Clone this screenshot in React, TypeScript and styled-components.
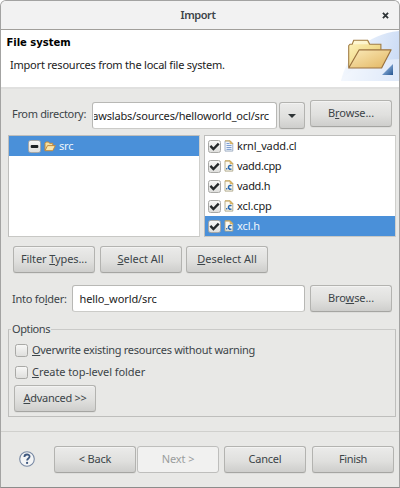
import React from 'react';
import styled, { createGlobalStyle, css } from 'styled-components';

const GlobalStyle = createGlobalStyle`
  * { box-sizing: border-box; }
  body { margin: 0; background: #fff; overflow: hidden; }
`;

const Dialog = styled.main`
  width: 400px;
  height: 488px;
  display: flex;
  flex-direction: column;
  border: 1px solid #a3a3a2;
  border-bottom-color: #8c8c8b;
  border-radius: 6px 6px 0 0;
  background: #e8e8e6;
  overflow: hidden;
  font: 11px/16px 'Noto Sans', 'Open Sans', sans-serif;
  color: #3c4448;
  white-space: nowrap;
`;

const Text = styled.span<{ $spacing?: number }>`
  letter-spacing: ${(p) => p.$spacing ?? 0}px;
`;

const Mnemonic = styled.span`
  text-decoration: underline;
  text-decoration-thickness: 1px;
  text-underline-offset: 1px;
  text-decoration-skip-ink: none;
`;

const TitleBar = styled.header`
  flex: none;
  height: 29px;
  display: grid;
  grid-template-columns: 28px 1fr 28px;
  align-items: center;
  text-align: center;
  background: #f2f2f2;
  border-bottom: 1px solid #a19f9b;
`;

const Title = styled.h1`
  grid-column: 2;
  margin: 0 4px 0 0;
  font-size: 11px;
  line-height: 16px;
  font-weight: 600;
  letter-spacing: -0.45px;
`;

const CloseButton = styled.button`
  border: 0;
  padding: 0 0 0 1px;
  background: none;
  height: 14px;
  display: grid;
  place-items: center;
`;

const Banner = styled.section`
  flex: none;
  height: 59px;
  display: flex;
  justify-content: space-between;
  background: #fff;
  border-bottom: 2px solid #e0e0df;
`;

const BannerText = styled.div`
  padding: 5px 0 0 5.5px;
  color: #222;
`;

const Heading = styled.h2`
  margin: 0 0 6px;
  font: bold 10px/16px 'DejaVu Sans', sans-serif;
  letter-spacing: -0.03px;
  color: #000;
`;

const Description = styled.p`
  margin: 0 0 0 3.5px;
  letter-spacing: -0.22px;
`;

const Content = styled.div`
  flex: 1;
  padding: 11px 4px 0 7px;
`;

const DirectoryRow = styled.div`
  height: 29px;
  display: flex;
  align-items: flex-start;
`;

const FieldLabel = styled.label<{ $width: number; $spacing: number }>`
  width: ${(p) => p.$width}px;
  padding: 6px 0 0 4px;
  letter-spacing: ${(p) => p.$spacing}px;
`;

const raised = css`
  border: 1px solid #b3b3b0;
  border-bottom-color: #a5a5a2;
  border-radius: 3px;
  background: linear-gradient(#ebebea, #e0e0de 55%, #cececc);
  box-shadow: inset 0 1px 0 #f3f3f2, 0 1px 0 #dededc;
`;

const Button = styled.button<{ $height?: number }>`
  ${raised}
  flex: none;
  width: 82px;
  height: ${(p) => p.$height ?? 27}px;
  padding: 0 0 1px;
  font: inherit;
  color: #3c4448;
  text-align: center;
  &:disabled {
    color: #9a9d9d;
    background: #f1f1f0;
    border-color: #bebebc;
    box-shadow: none;
  }
`;

const Field = styled.div<{ $width: number; $indent: number }>`
  width: ${(p) => p.$width}px;
  height: 27px;
  padding: 4.5px 0 0 ${(p) => p.$indent}px;
  border: 1px solid #b8b8b5;
  border-bottom-color: #cbcbc8;
  border-radius: 3px;
  background: #fff;
  color: #222;
  overflow: hidden;
`;

const LeadingField = styled(Field)`
  margin-top: 2px;
`;

const ClippedText = styled.div`
  display: flex;
  justify-content: flex-end;
  overflow: hidden;
  width: 175px;
  letter-spacing: -0.16px;
`;

const DropButton = styled.button`
  ${raised}
  width: 26px;
  height: 27px;
  margin: 2px 5px 0 2px;
  padding: 0;
  display: grid;
  place-items: center;
`;

const Panes = styled.div`
  height: 102px;
  margin-top: 6px;
  display: grid;
  grid-template-columns: 192px 192px;
  gap: 4px;
`;

const Pane = styled.div`
  border: 1px solid #bebebc;
  border-bottom: 1px solid #c8c8c5;
  border-right-color: #cfcfcc;
  background: #fff;
  overflow: hidden;
`;

const ItemRow = styled.div<{ $selected?: boolean; $indent: number }>`
  height: 20px;
  display: flex;
  align-items: center;
  gap: 3px;
  padding-left: ${(p) => p.$indent}px;
  color: ${(p) => (p.$selected ? '#eef5fc' : '#222')};
  background: ${(p) => (p.$selected ? '#4a90d9' : 'transparent')};
`;

const Box = styled.span`
  width: 13px;
  height: 13px;
  flex: none;
  display: grid;
  place-items: center;
  border: 1px solid #a9a9a6;
  border-radius: 2.5px;
  background: linear-gradient(#f7f7f6, #dfdfdd);
`;

const SelectionButtons = styled.div`
  display: flex;
  gap: 4.5px;
  margin: 9px 0 12px 5px;
`;

const FolderRow = styled.div`
  display: flex;
  height: 28px;
`;

const FolderField = styled(Field)`
  margin-right: 5px;
`;

const Options = styled.fieldset`
  height: 96px;
  width: 388px;
  margin: 8px 0 0;
  padding: 2px 0 0 5px;
  border: 1px solid #bebebc;
  border-top-color: #cacac8;
  display: flex;
  flex-direction: column;
  align-items: flex-start;
`;

const Legend = styled.legend`
  margin-left: -3px;
  padding: 0 1px 0 1px;
  line-height: 16px;
  letter-spacing: -0.4px;
`;

const CheckRow = styled.label`
  height: 22px;
  display: flex;
  align-items: center;
  gap: 4px;
  padding-left: 1px;
`;

const AdvancedButton = styled(Button)`
  margin-top: 2px;
`;

const Footer = styled.footer`
  flex: none;
  height: 56px;
  display: flex;
  align-items: flex-start;
  padding: 14px 0 0 17px;
  border-top: 1px solid #d0d0cd;
`;

const Help = styled.span`
  width: 36px;
  padding-top: 4px;
  line-height: 0;
`;

const NextButton = styled(Button)`
  margin: 0 5px 0 1px;
`;

const FinishButton = styled(Button)`
  margin-left: 6px;
`;

const CheckMark = () => (
  <svg width="11" height="11" viewBox="0 0 11 11">
    <path d="M1.4 4.9 4.4 8 9.7 2.6" fill="none" stroke="#25292b" strokeWidth="2.4" />
  </svg>
);

const OpenFolder = () => (
  <svg width="12" height="11" viewBox="0 0 12 11">
    <path d="M1 9.5V2.2L2 1h2.6l1 1.3h3.2V5" fill="#f4dfa0" stroke="#c08a3e" />
    <path d="M1 9.7 3.5 4.6h7.8L8.8 9.7z" fill="#fbe6ab" stroke="#c08a3e" />
  </svg>
);

const FileIcon = ({ source }: { source: boolean }) => (
  <svg width="10" height="12" viewBox="0 0 10 12">
    <path d="M1 .9h5.2L8.8 3.6v7.5H1z" fill={source ? '#fdfaf0' : '#eef4fc'} stroke={source ? '#ada587' : '#9caac0'} strokeWidth=".9" />
    <path d="M1 .9h5.2L8.8 3.6H6.2V.9" fill="#ecd08d" stroke="#cfa64e" strokeWidth=".9" />
    {source ? (
      <>
        <path d="M7.5 5.8C5.8 4.9 4.5 5.8 4.5 7.3S5.8 9.7 7.5 8.9" fill="none" stroke="#2968ae" strokeWidth="1.6" />
        <path d="M2.1 8.1h1.3v1.3H2.1z" fill="#2968ae" />
      </>
    ) : (
      <path d="M2.5 3.5h3M2.5 5.5h5M2.5 7.5h5M2.5 9.4h5" stroke="#6f94cc" strokeWidth=".9" />
    )}
  </svg>
);

const BannerArt = () => (
  <svg width="58" height="57" viewBox="0 0 58 57">
    <defs>
      <linearGradient id="glow" x1="0" y1="0.3" x2="1" y2="0.5">
        <stop offset="0" stopColor="#f8fbff" />
        <stop offset="1" stopColor="#ccdcf5" />
      </linearGradient>
      <linearGradient id="back" x1="0" y1="0" x2="1" y2="1">
        <stop offset="0" stopColor="#fff4bd" />
        <stop offset="1" stopColor="#e6c768" />
      </linearGradient>
      <linearGradient id="front" x1="0" y1="0" x2="1" y2="1">
        <stop offset="0" stopColor="#fbebbb" />
        <stop offset="1" stopColor="#e2b560" />
      </linearGradient>
      <linearGradient id="corner" x1="0" y1="0" x2="1" y2="1">
        <stop offset="0.3" stopColor="#8db0dc" />
        <stop offset="1" stopColor="#24558f" />
      </linearGradient>
    </defs>
    <path d="M0 51C5 27 25 4 58 1v50z" fill="url(#glow)" />
    <path d="M0 51C7 38 31 30 58 29v22z" fill="#f4f8fe" opacity=".5" />
    <path d="M7.7 37.5V15.6l1.3-1.4h2.2l1.5-4h14l2 4h11.2v7" fill="url(#back)" stroke="#a07c45" strokeWidth="1.1" />
    <path d="M12 14.2l1.5-3.2h12.3l1.6 3.2z" fill="#fffbe0" opacity=".7" />
    <path d="M7.7 38 18.2 19.8h31.9L40.6 38z" fill="url(#front)" stroke="#9b7340" strokeWidth="1.2" strokeLinejoin="round" />
    <path d="M52 34v11H41z" fill="url(#corner)" />
  </svg>
);

const files = [
  { name: 'krnl_vadd.cl', spacing: -0.15 },
  { name: 'vadd.cpp', spacing: -0.35 },
  { name: 'vadd.h', spacing: -0.3 },
  { name: 'xcl.cpp', spacing: -0.1 },
  { name: 'xcl.h', spacing: -0.1 },
];

export default function App() {
  return (
    <>
      <GlobalStyle />
      <Dialog>
        <TitleBar>
          <Title>Import</Title>
          <CloseButton aria-label="Close">
            <svg width="7" height="7" viewBox="0 0 7 7">
              <path d="M.9.9l5.2 5.2M6.1.9.9 6.1" stroke="#2e3436" strokeWidth="1.8" />
            </svg>
          </CloseButton>
        </TitleBar>
        <Banner>
          <BannerText>
            <Heading>File system</Heading>
            <Description>Import resources from the local file system.</Description>
          </BannerText>
          <BannerArt />
        </Banner>
        <Content>
          <DirectoryRow>
            <FieldLabel $width={84} $spacing={-0.33}>From directory:</FieldLabel>
            <LeadingField $width={185} $indent={1}>
              <ClippedText>awslabs/sources/helloworld_ocl/src</ClippedText>
            </LeadingField>
            <DropButton aria-label="Recent directories">
              <svg width="8" height="4" viewBox="0 0 8 4"><path d="M0 0h8L4 4z" fill="#2e3436" /></svg>
            </DropButton>
            <Button><Text $spacing={-0.1}>B<Mnemonic>r</Mnemonic>owse...</Text></Button>
          </DirectoryRow>
          <Panes>
            <Pane>
              <ItemRow $selected $indent={19}>
                <Box>
                  <svg width="9" height="9" viewBox="0 0 9 9"><rect x=".7" y="3" width="7.6" height="3" rx="1" fill="#1e2224" /></svg>
                </Box>
                <OpenFolder />
                <Text $spacing={-0.2}>src</Text>
              </ItemRow>
            </Pane>
            <Pane>
              {files.map((f, i) => (
                <ItemRow key={f.name} $selected={i === 4} $indent={3}>
                  <Box><CheckMark /></Box>
                  <FileIcon source={i > 0} />
                  <Text $spacing={f.spacing}>{f.name}</Text>
                </ItemRow>
              ))}
            </Pane>
          </Panes>
          <SelectionButtons>
            <Button><Text $spacing={-0.1}>Filter <Mnemonic>T</Mnemonic>ypes...</Text></Button>
            <Button><Text><Mnemonic>S</Mnemonic>elect All</Text></Button>
            <Button><Text><Mnemonic>D</Mnemonic>eselect All</Text></Button>
          </SelectionButtons>
          <FolderRow>
            <FieldLabel $width={64} $spacing={-0.25}>Into fo<Mnemonic>l</Mnemonic>der:</FieldLabel>
            <FolderField $width={233} $indent={6.5}><Text $spacing={-0.1}>hello_world/src</Text></FolderField>
            <Button><Text $spacing={-0.1}>Bro<Mnemonic>w</Mnemonic>se...</Text></Button>
          </FolderRow>
          <Options>
            <Legend>Options</Legend>
            <CheckRow>
              <Box />
              <Text $spacing={-0.28}><Mnemonic>O</Mnemonic>verwrite existing resources without warning</Text>
            </CheckRow>
            <CheckRow>
              <Box />
              <Text $spacing={-0.07}><Mnemonic>C</Mnemonic>reate top-level folder</Text>
            </CheckRow>
            <AdvancedButton><Text $spacing={-0.27}><Mnemonic>A</Mnemonic>dvanced &gt;&gt;</Text></AdvancedButton>
          </Options>
        </Content>
        <Footer>
          <Help>
            <svg width="18" height="18" viewBox="0 0 18 18">
              <circle cx="9" cy="9" r="7.3" fill="#f3f4f5" stroke="#7788a3" strokeWidth="1.1" />
              <path d="M6.4 6.9C6.4 3.7 11.6 3.8 11.6 6.6 11.6 8.5 9.1 8.5 9.1 10.6" fill="none" stroke="#3f587f" strokeWidth="1.8" />
              <circle cx="9.1" cy="12.9" r="1.1" fill="#3f587f" />
            </svg>
          </Help>
          <Button><Text $spacing={-0.2}>&lt; Back</Text></Button>
          <NextButton disabled><Text $spacing={-0.1}>Next &gt;</Text></NextButton>
          <Button><Text $spacing={-0.2}>Cancel</Text></Button>
          <FinishButton><Text $spacing={-0.35}>Finish</Text></FinishButton>
        </Footer>
      </Dialog>
    </>
  );
}
